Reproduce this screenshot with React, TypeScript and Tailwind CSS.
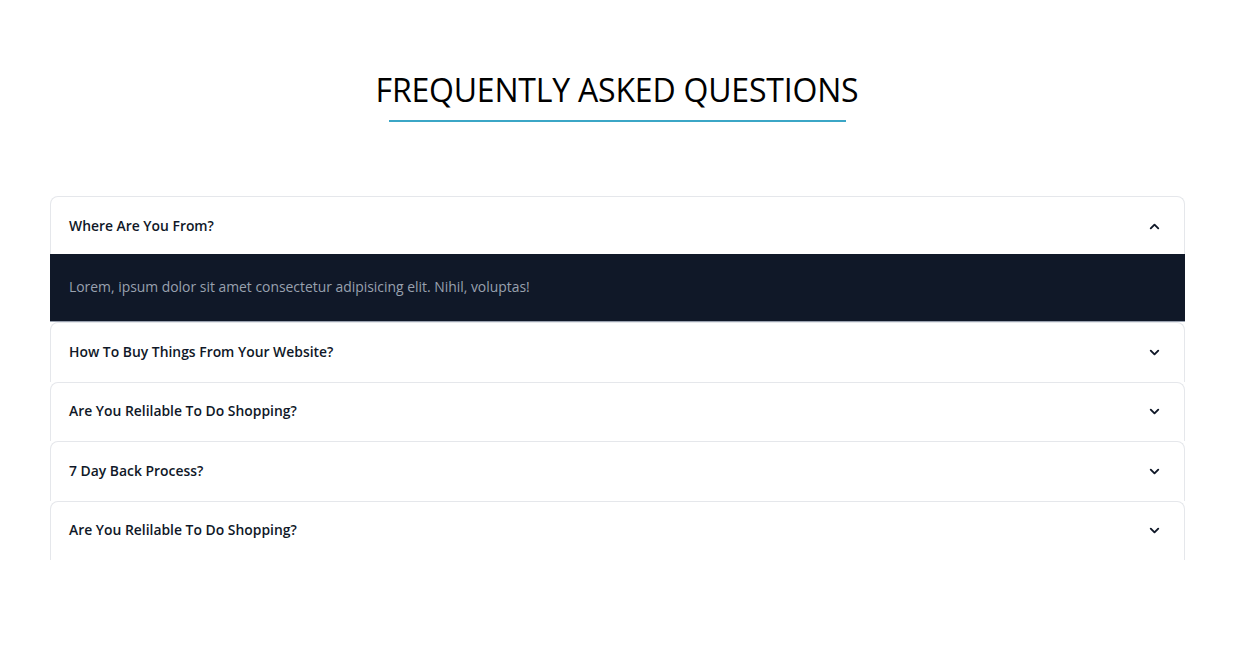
import { ChevronDown, ChevronUp } from "lucide-react";

const faqs = [
  { q: "Where Are You From?", a: "Lorem, ipsum dolor sit amet consectetur adipisicing elit. Nihil, voluptas!", open: true },
  { q: "How To Buy Things From Your Website?" },
  { q: "Are You Relilable To Do Shopping?" },
  { q: "7 Day Back Process?" },
  { q: "Are You Relilable To Do Shopping?" },
];

export default function App() {
  return (
    <div className="w-full h-[645px] bg-white font-['Open_Sans',sans-serif]">
      <div className="pt-[68px] flex flex-col items-center">
        <h2 className="text-[32px] leading-[44px] text-black tracking-[-0.2px]">FREQUENTLY ASKED QUESTIONS</h2>
        <div className="w-[457px] h-[2px] bg-[#3ba6c6] mt-[8px]" />
      </div>

      <div className="mt-[74px] ml-[50px] mr-[49px] h-[364px] overflow-hidden">
        {faqs.map((f, i) => (
          <div key={i} className="rounded-t-lg border border-b-0 border-gray-200 bg-white">
            <div className="h-[58.5px] flex items-center justify-between pl-[18px] pr-[22px]">
              <span className="text-[13.9px] font-semibold text-gray-900">{f.q}</span>
              {f.open ? (
                <ChevronUp size={15} strokeWidth={3} className="text-gray-900" />
              ) : (
                <ChevronDown size={15} strokeWidth={3} className="text-gray-900" />
              )}
            </div>
            {f.a && (
              <div className="h-[68px] -mt-[1.5px] -mx-px flex items-center bg-gray-900 pl-[19px] border-b border-gray-400">
                <span className="text-[13.9px] text-gray-400">{f.a}</span>
              </div>
            )}
          </div>
        ))}
      </div>
    </div>
  );
}
